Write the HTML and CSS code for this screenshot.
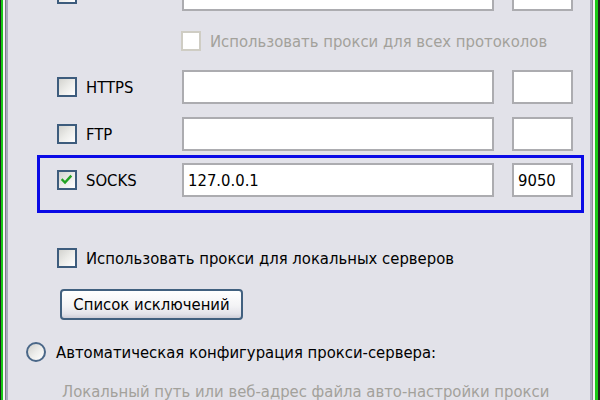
FILE: index.html
```html
<!DOCTYPE html>
<html lang="ru">
<head>
<meta charset="utf-8">
<title>Прокси</title>
<link rel="stylesheet" href="styles.css">
</head>
<body>
<div class="win">
  <div class="row row-top">
    <span class="cb"></span>
    <span class="lbl"></span>
    <span class="field host"></span>
    <span class="field port"></span>
  </div>
  <div class="row-all">
    <span class="cb cb-disabled"></span>
    <span class="txt-disabled">Использовать прокси для всех протоколов</span>
  </div>
  <div class="row row-https">
    <span class="cb"></span>
    <span class="lbl">HTTPS</span>
    <span class="field host"></span>
    <span class="field port"></span>
  </div>
  <div class="row row-ftp">
    <span class="cb"></span>
    <span class="lbl">FTP</span>
    <span class="field host"></span>
    <span class="field port"></span>
  </div>
  <div class="socks-box">
    <div class="row">
      <span class="cb cb-checked"><svg viewBox="0 0 16 16" width="16" height="16"><path d="M3.5 8 L6 10.5 L11.5 4.5" fill="none" stroke="#22a322" stroke-width="2.4" stroke-linecap="square"/></svg></span>
      <span class="lbl">SOCKS</span>
      <span class="field host">127.0.0.1</span>
      <span class="field port">9050</span>
    </div>
  </div>
  <div class="row-local">
    <span class="cb"></span>
    <span class="txt">Использовать прокси для локальных серверов</span>
  </div>
  <div class="btn-row">
    <button class="btn">Список исключений</button>
  </div>
  <div class="row-radio">
    <span class="radio"></span>
    <span class="txt">Автоматическая конфигурация прокси-сервера:</span>
  </div>
  <div class="row-hint">Локальный путь или веб-адрес файла авто-настройки прокси</div>
</div>
</body>
</html>
```

FILE: styles.css
```css
html, body {
  margin: 0;
  padding: 0;
}
body {
  width: 600px;
  height: 400px;
  overflow: hidden;
}
.win {
  width: 600px;
  height: 400px;
  box-sizing: border-box;
  overflow: hidden;
  background: #e2e2e9;
  font-family: "DejaVu Sans Condensed", "DejaVu Sans", sans-serif;
  font-size: 16.5px;
  color: #000;
  box-shadow:
    inset 1px 0 #1e1e1e,
    inset 3px 0 #18c818,
    inset 5px 0 #f4f4f6,
    inset 6px 0 #7c7c86,
    inset 8px 0 #a9a9bf,
    inset -2px 0 #1e1e1e,
    inset -5px 0 #18c818,
    inset -7px 0 #f4f4f6,
    inset -8px 0 #8a8a96,
    inset -10px 0 #a9a9bf;
}
.row {
  display: flex;
  align-items: center;
  height: 34px;
  padding-left: 57px;
}
.row-top { margin-top: -23px; }
.row-https { margin-top: 19px; }
.row-ftp { margin-top: 13px; }

.cb {
  flex: none;
  width: 20px;
  height: 20px;
  box-sizing: border-box;
  border: 2px solid #3d5c7d;
  background: linear-gradient(135deg, #d3d3cf 0%, #ecece9 50%, #ffffff 100%);
  display: flex;
  align-items: center;
  justify-content: center;
}
.row .cb { margin-right: 9px; }
.cb-disabled {
  border-color: #cfcdc4;
  background: #ffffff;
}
.lbl {
  flex: none;
  width: 96px;
}
.field {
  flex: none;
  height: 34px;
  box-sizing: border-box;
  border: 2px solid #acacb0;
  background: #fff;
  padding-left: 4px;
  display: flex;
  align-items: center;
}
.host { width: 312px; }
.port { width: 61px; margin-left: 18px; }

.row-all {
  display: flex;
  align-items: center;
  height: 20px;
  margin-top: 20px;
  padding-left: 181px;
}
.txt-disabled {
  margin-left: 9px;
  color: #a3a19b;
}
.socks-box {
  margin-top: 4px;
  margin-left: 37px;
  width: 547px;
  box-sizing: border-box;
  border: 3px solid #0a0ae6;
  padding: 5px 0 13px 0;
}
.socks-box .row { padding-left: 17px; }

.row-local {
  display: flex;
  align-items: center;
  height: 20px;
  margin-top: 35px;
  padding-left: 57px;
}
.row-local .txt { margin-left: 9px; }

.btn-row {
  margin-top: 21px;
  padding-left: 60px;
  display: flex;
}
.btn {
  width: 183px;
  height: 31px;
  box-sizing: border-box;
  border: 2px solid #41607f;
  border-radius: 4px;
  background: linear-gradient(180deg, #ffffff 0%, #f3f3f5 55%, #e3e3ea 85%, #cdcdd8 100%);
  font-family: "DejaVu Sans Condensed", "DejaVu Sans", sans-serif;
  font-size: 16.5px;
  color: #000;
  padding: 0;
}
.row-radio {
  display: flex;
  align-items: center;
  height: 20px;
  margin-top: 22px;
  padding-left: 26px;
}
.radio {
  flex: none;
  width: 20px;
  height: 20px;
  box-sizing: border-box;
  border: 2px solid #4a6788;
  border-radius: 50%;
  background: linear-gradient(135deg, #d0d0cc 0%, #ececea 50%, #ffffff 100%);
}
.row-radio .txt { margin-left: 10px; }
.row-hint {
  margin-top: 20px;
  height: 20px;
  line-height: 20px;
  padding-left: 62px;
  color: #a3a19b;
  white-space: nowrap;
}
```
